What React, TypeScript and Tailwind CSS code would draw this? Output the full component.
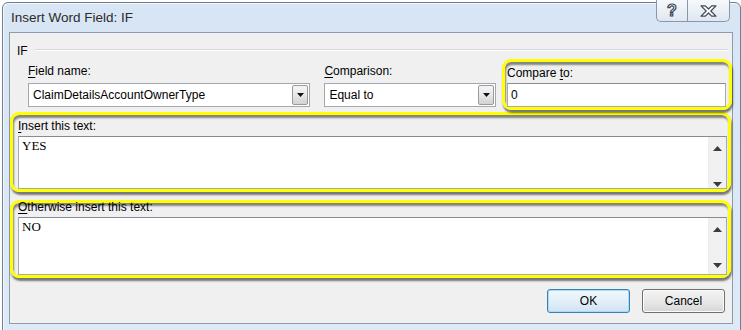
import React from 'react';

function DropButton() {
  return (
    <div className="mr-[1px] flex h-[20px] w-[16px] items-center justify-center rounded-[2px] border border-[#9a9a9a] bg-gradient-to-b from-[#f5f5f5] via-[#e8e8e8] to-[#d2d2d2]">
      <svg width="7" height="4" viewBox="0 0 7 4">
        <path d="M0 0H7L3.5 4Z" fill="#111" />
      </svg>
    </div>
  );
}

function Combo({ value }: { value: string }) {
  return (
    <div className="mt-[4px] flex h-[24px] items-center border border-[#a3a8b0] bg-white">
      <span className="flex-1 pl-[4px] leading-[16px]">{value}</span>
      <DropButton />
    </div>
  );
}

function ScrollArrow({ up }: { up?: boolean }) {
  return (
    <svg width="9" height="5" viewBox="0 0 9 5">
      <path d={up ? 'M0 5L4.5 0L9 5Z' : 'M0 0H9L4.5 5Z'} fill="#3c3c3c" />
    </svg>
  );
}

function TextArea({ value, height }: { value: string; height: string }) {
  return (
    <div className={`mt-[2px] flex border border-[#a5a9b0] border-t-[#868b93] bg-white ${height}`}>
      <div className="flex-1 pl-[3px] pt-[1px] font-['Liberation_Serif','Times_New_Roman',serif] text-[13px] leading-[16px]">
        {value}
      </div>
      <div className="flex w-[18px] flex-col items-center border-l border-[#ececec] bg-[#f1f1f1] pt-[9px]">
        <ScrollArrow up />
        <div className="mt-[31px]">
          <ScrollArrow />
        </div>
      </div>
    </div>
  );
}

const yellow =
  'border-[3px] border-[#ffff00] rounded-[9px] shadow-[1px_3px_2px_rgba(0,0,0,0.5),inset_1px_3px_2px_rgba(0,0,0,0.45)]';

export default function App() {
  return (
    <div className="h-[330px] w-[741px] overflow-hidden bg-white font-['Liberation_Sans',Arial,sans-serif] text-[12px] text-black">
      {/* window frame */}
      <div className="ml-[2px] mt-[2px] h-[340px] w-[739px] rounded-t-[6px] border border-[#6f7f92] bg-gradient-to-b from-[#d8e5f4] to-[#dfeaf7] shadow-[inset_1px_1px_0_rgba(255,255,255,0.7)]">
        {/* title bar */}
        <div className="flex h-[29px] items-start">
          <div className="pl-[8px] pt-[7px] text-[13.5px] leading-[16px] text-[#2a2a2a]">Insert Word Field: IF</div>
          <div className="ml-auto mr-[10px] -mt-[3px] flex h-[22px] overflow-hidden rounded-b-[5px] border border-t-0 border-[#8796aa] bg-gradient-to-b from-[#f6f9fc] to-[#dfe7f1]">
            <div className="flex w-[30px] items-center justify-center text-[16px] font-bold leading-none text-white [-webkit-text-stroke:1.2px_#3f4955]">
              ?
            </div>
            <div className="flex w-[42px] items-center justify-center border-l border-[#8796aa]">
              <svg width="17" height="12" viewBox="0 0 17 12">
                <path
                  d="M1 0.8H5.3L8.5 4L11.7 0.8H16L10.8 6L16 11.2H11.7L8.5 8L5.3 11.2H1L6.2 6Z"
                  fill="#fff"
                  stroke="#3f4955"
                  strokeWidth="1.2"
                  strokeLinejoin="round"
                />
              </svg>
            </div>
          </div>
        </div>

        {/* client area */}
        <div className="ml-[6px] h-[292px] w-[724px] border border-[#8e9bab] bg-[#f0f0f0]">
          {/* group heading */}
          <div className="mt-[10px] flex h-[16px] items-start">
            <span className="ml-[7px] leading-[16px]">IF</span>
            <div className="ml-[7px] mr-[4px] mt-[6px] flex-1 border-t border-b border-t-[#d3d9df] border-b-white" />
          </div>

          {/* top row */}
          <div className="flex items-start">
            <div className="ml-[18px] w-[283px] pt-[4px]">
              <div className="leading-[16px]">
                <span className="underline underline-offset-2">F</span>ield name:
              </div>
              <Combo value="ClaimDetailsAccountOwnerType" />
            </div>
            <div className="ml-[14px] w-[172px] pt-[4px]">
              <div className="leading-[16px]">
                <span className="underline underline-offset-2">C</span>omparison:
              </div>
              <Combo value="Equal to" />
            </div>
            <div className={`ml-[6px] h-[51px] w-[230px] shrink-0 pl-[2px] pr-[3px] pt-[3px] ${yellow}`}>
              <div className="leading-[16px]">
                Compare <span className="underline underline-offset-2">t</span>o:
              </div>
              <div className="mt-[2px] flex h-[24px] items-center border border-[#a5a9b0] border-t-[#868b93] bg-white pl-[3px] leading-[16px]">
                0
              </div>
            </div>
          </div>

          {/* insert this text */}
          <div className={`mt-[2px] h-[80px] w-[721px] pl-[5px] pr-[1px] pt-[3px] ${yellow}`}>
            <div className="leading-[16px]">
              <span className="underline underline-offset-2">I</span>nsert this text:
            </div>
            <TextArea value="YES" height="h-[53px]" />
          </div>

          {/* otherwise insert this text */}
          <div className={`mt-[8px] h-[78px] w-[721px] pl-[5px] pr-[1px] ${yellow}`}>
            <div className="-mt-[4px] leading-[16px]">
              <span className="underline underline-offset-2">O</span>therwise insert this text:
            </div>
            <TextArea value="NO" height="h-[58px]" />
          </div>

          {/* buttons */}
          <div className="mt-[11px] flex justify-end gap-[12px] pr-[7px]">
            <button className="h-[24px] w-[83px] rounded-[3px] border border-[#3c7fb1] bg-gradient-to-b from-[#f2f8fc] via-[#e3eff8] to-[#cfe3f1] leading-[16px] shadow-[inset_0_0_0_1px_#a6dcf5]">
              OK
            </button>
            <button className="h-[24px] w-[83px] rounded-[3px] border border-[#707070] bg-gradient-to-b from-[#f3f3f3] via-[#e9e9e9] to-[#d6d6d6] leading-[16px] shadow-[inset_0_0_0_1px_#fbfbfb]">
              Cancel
            </button>
          </div>
        </div>
      </div>
    </div>
  );
}
